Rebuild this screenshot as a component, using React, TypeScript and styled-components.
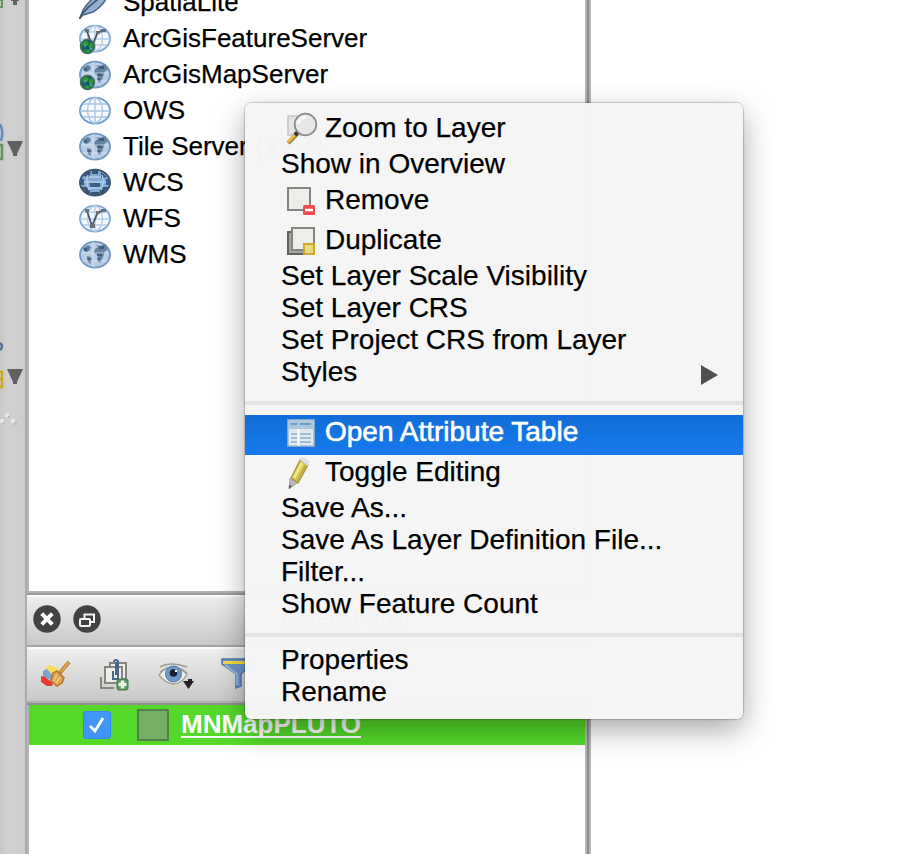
import React from "react";
import styled, { createGlobalStyle } from "styled-components";

const GlobalStyle = createGlobalStyle`
  html, body { margin: 0; padding: 0; background: #fff; }
  body { overflow: hidden; font-family: "Liberation Sans", Arial, Helvetica, sans-serif; color: #000; }
  svg { display: block; flex: none; }
`;

const Window = styled.div`
  position: relative;
  display: grid;
  grid-template-columns: 25px 566px 1fr;
  width: 913px;
  height: 854px;
  overflow: hidden;
  background: #fff;
`;

const ToolStrip = styled.div`
  display: flex;
  flex-direction: column;
  background: linear-gradient(90deg, #c8c8c8 0, #d0d0d0 8px, #cccccc 100%);
`;

const ToolSlot = styled.div<{ $gap: number }>`
  margin-top: ${(p) => p.$gap}px;
`;

const Dock = styled.div`
  display: flex;
  flex-direction: column;
  height: 854px;
  box-sizing: border-box;
  border-left: 2px solid #acacac;
`;

const Framed = styled.div<{ $height: number }>`
  box-sizing: border-box;
  height: ${(p) => p.$height}px;
  border-left: 2px solid #b4b4b4;
  border-right: 2px solid #b5b5b5;
  box-shadow: inset -2px 0 #8c8c8c, inset -4px 0 #b5b5b5;
  background: #fff;
  overflow: hidden;
`;

const SourceList = styled.div`
  margin-top: -16px;
`;

const SourceRow = styled.div`
  display: flex;
  align-items: center;
  height: 36px;
  padding-left: 50px;
  gap: 12px;
  font-size: 26px;
  line-height: 36px;
  white-space: pre;
  -webkit-text-stroke: 0.25px #000;
`;

const PanelBar = styled.div<{ $height: number }>`
  display: flex;
  align-items: center;
  box-sizing: border-box;
  height: ${(p) => p.$height}px;
  background: linear-gradient(#eeeeee, #c8c8c8);
  border-top: 2px solid #fcfcfc;
`;

const Rule = styled.div<{ $color: string }>`
  flex: none;
  height: 2px;
  background: ${(p) => p.$color};
`;

const PanelButtons = styled.div`
  display: flex;
  gap: 12px;
  padding: 0 0 4px 6px;
`;

const PanelTitle = styled.div`
  margin-left: 180px;
  padding-bottom: 6px;
  font-size: 22px;
  line-height: 26px;
`;

const LayerTools = styled.div`
  display: flex;
  align-items: center;
  gap: 27px;
  padding: 0 0 0 13px;
`;

const LayerRow = styled.div`
  display: flex;
  align-items: center;
  height: 40px;
  margin-right: 4px;
  padding-left: 54px;
  background: #54d92b;
  color: #fff;
  font-size: 26px;
  font-weight: bold;
`;

const Check = styled.div`
  display: grid;
  place-items: center;
  width: 28px;
  height: 28px;
  border-radius: 4px;
  background: linear-gradient(#4499f8, #3e94f6);
  box-shadow: inset 0 0 0 1px #3388ed;
`;

const Swatch = styled.div`
  box-sizing: border-box;
  width: 32px;
  height: 32px;
  margin: 0 12px 0 26px;
  border: 2px solid #557f49;
  background: #74af65;
`;

const LayerName = styled.span`
  line-height: 28px;
  height: 28px;
  margin-bottom: 2px;
  border-bottom: 2px solid #fff;
  box-sizing: border-box;
`;

const Menu = styled.div`
  position: absolute;
  left: 245px;
  top: 103px;
  width: 498px;
  height: 616px;
  box-sizing: border-box;
  padding-top: 4px;
  border-radius: 6px;
  overflow: hidden;
  background: rgba(245, 245, 245, 0.988);
`;

const MenuShadow = styled.div`
  position: absolute;
  left: 245px;
  top: 103px;
  width: 498px;
  height: 616px;
  border-radius: 7px;
  box-shadow: 0 0 0 1px rgba(0, 0, 0, 0.1), 0 0 3px rgba(0, 0, 0, 0.2),
    0 11px 30px rgba(0, 0, 0, 0.34);
`;

const MenuItem = styled.div<{ $icon?: boolean }>`
  display: flex;
  align-items: center;
  box-sizing: border-box;
  height: ${(p) => (p.$icon ? 40 : 32)}px;
  padding: 2px 22px 0 ${(p) => (p.$icon ? 42 : 36)}px;
  font-size: 28px;
  line-height: 30px;
  white-space: nowrap;
  -webkit-text-stroke: 0.25px #000;
`;

const ActiveItem = styled(MenuItem)`
  padding-top: 0;
  padding-bottom: 6px;
  margin-bottom: -4px;
  color: #fff;
  background: linear-gradient(#126cd6, #177bee);
  -webkit-text-stroke: 0.6px #fff;
`;

const IconCell = styled.span`
  display: grid;
  width: 38px;
  height: 36px;
  align-content: center;
  padding-top: 2px;
  box-sizing: border-box;
`;

const Separator = styled.div<{ $after: number }>`
  height: 4px;
  margin: 14px 0 ${(p) => p.$after}px;
  background: #e3e3e3;
`;

const SubArrow = styled.span`
  margin: 6px 3px 0 auto;
`;

type GlobeKind = "grid" | "land" | "dark" | "vector";

function Globe({ kind, badge }: { kind: GlobeKind; badge?: boolean }) {
  const fill = { grid: "#f7faff", land: "#b9cee6", dark: "#83aad4", vector: "#f5f8fd" }[kind];
  const edge = { grid: "#709bce", land: "#7399c4", dark: "#3c536d", vector: "#82a9d6" }[kind];
  return (
    <svg width="32" height="34" viewBox="0 -3 32 34">
      <ellipse cx="16" cy="14.6" rx="15" ry="13" fill={fill} stroke={edge} strokeWidth="1.9" />
      {kind === "dark" && (
        <>
          <path d="M4 8l5-5 3 1-2 5zM13 2h6v4h-6zM22 4l6 5-6 1zM2 19h7l3 7-4-1zM22 19h8l-6 6-4 1zM12 24h8v3h-8z" fill="#385575" />
          <path d="M2 14h28M9 7q-3 7 1 15M23 7q3 7-1 15M10 9h12M10 20h12" fill="none" stroke="#b4cde9" strokeWidth="1.5" />
          <path d="M11 15h10v4H11zM1 11h4v6H2zM27 11h4l-1 6h-3z" fill="#385e8a" />
        </>
      )}
      {(kind === "grid" || kind === "vector") && (
        <g fill="none" stroke={kind === "grid" ? "#a9c5e5" : "#b5cde8"} strokeWidth="1.4">
          <path d="M4 8h24M1 15h30M4 21h24M16 2v25" />
          <ellipse cx="16" cy="14.5" rx="7.5" ry="12.5" />
        </g>
      )}
      {kind === "land" && (
        <>
          <path d="M4 8l5-3 3 2-1 3-3 2-3-1zM8 16l4 1 1 3-2 4-3-4zM17 5l4 1 5-2 3 6-3 1-2 6-3 6-3-3 1-5-4-2 1-4 3-2z" fill="#64829f" />
          <path d="M5 8h3v3H5zM18 13h5v3h-5zM9 18h2v4H9zM20 6h5v3h-5zM19 18h2v4h-2z" fill="#405f85" />
          <path d="M3 13h26M14 2v25M3 21h25" stroke="#dce8f5" strokeOpacity=".5" strokeWidth="1.5" />
        </>
      )}
      {kind === "vector" && (
        <g fill="none" stroke="#4b535d" strokeWidth="2">
          <path d="M8 7l5 15 6-14 5-1" strokeWidth="1.8" />
          <path d="M6 5h4v3H6zM17 7h4v3h-4zM22 5h5v3h-5zM11 20h5v4h-5z" fill="#68717c" stroke="none" />
        </g>
      )}
      {badge && (
        <>
          <circle cx="8.5" cy="22.5" r="7" fill="#26704b" stroke="#46705f" strokeWidth="1.5" />
          <path d="M3 20l4-3 3 2-3 4zM12 18l2 4-2 3-3-2zM6 26h4v2H7z" fill="#2f9c2f" />
          <path d="M7 22h3v3H7zM9 16l3 1-1 3zM2 23l3 1 1 3z" fill="#134c86" />
          <path d="M5 20h2v2H5zM11 24h2v2h-2z" fill="#3ba7ae" />
        </>
      )}
    </svg>
  );
}

const Feather = () => (
  <svg width="32" height="34" viewBox="0 -17 32 34">
    <path d="M1 16l3-8Q13-6 31-16q-2 17-17 26L4 13z" fill="#91b2d6" stroke="#4d6887" strokeWidth="1.5" />
    <path d="M0 18L3 12Q12 1 27-8" fill="none" stroke="#405469" strokeWidth="1.6" />
  </svg>
);

const DropArrow = () => <path d="M7 0h16l-6 13v2h-4v-2z" fill="#606060" />;

const sources: [string, React.ReactNode][] = [
  ["SpatiaLite", <Feather />],
  ["ArcGisFeatureServer", <Globe kind="vector" badge />],
  ["ArcGisMapServer", <Globe kind="land" badge />],
  ["OWS", <Globe kind="grid" />],
  ["Tile Server (XYZ)", <Globe kind="land" />],
  ["WCS", <Globe kind="dark" />],
  ["WFS", <Globe kind="vector" />],
  ["WMS", <Globe kind="land" />],
];

const CloseIcon = () => (
  <svg width="28" height="28" viewBox="0 0 28 28">
    <circle cx="14" cy="14" r="13.7" fill="#424242" />
    <path d="M8.7 8.7l10.6 10.6M19.3 8.7L8.7 19.3" stroke="#fff" strokeWidth="4" />
  </svg>
);

const FloatIcon = () => (
  <svg width="28" height="28" viewBox="0 0 28 28">
    <circle cx="14" cy="14" r="13.7" fill="#424242" />
    <g fill="none" stroke="#f5f5f5" strokeWidth="2">
      <path d="M11.5 13V9.5h9.5v7.5h-3.5" />
      <rect x="7" y="14" width="10" height="7" rx="1" />
    </g>
  </svg>
);

const BrushIcon = () => (
  <svg width="32" height="32" viewBox="0 -1 32 32">
    <path d="M5 9l4-4 10 4-4 6z" fill="#f5df53" />
    <path d="M3 11l4-2 7 8-3 3-8-3z" fill="#7fa2cc" />
    <path d="M1 16l4 1 8 6-1 3H7l-6-4z" fill="#e83a31" />
    <path d="M29 2L20 13" stroke="#bd8434" strokeWidth="4" />
    <path d="M28 3l-7 9" stroke="#e2a956" strokeWidth="2" />
    <path d="M13 13l4-2 7 7-2 5-5 3-6-5z" fill="#dda653" stroke="#b9782e" strokeWidth="1.5" />
    <path d="M17 14l-3 7M20 17l-4 6" stroke="#f1c985" strokeWidth="1.6" />
  </svg>
);

const GroupIcon = () => (
  <svg width="32" height="34" viewBox="1 0 32 34">
    <g fill="#ededeb" stroke="#85857e" strokeWidth="2">
      <path d="M3 19v11h13" fill="none" />
      <rect x="12" y="5" width="16" height="16" />
      <rect x="7" y="9" width="17" height="16" />
    </g>
    <path d="M15 13v8h5V4q0-2-2-2t-2 2M18 17V4" fill="none" stroke="#456790" strokeWidth="2" />
    <rect x="19" y="21" width="11" height="11" rx="2" fill="#5c9660" stroke="#407943" />
    <path d="M24.5 22.5v8M20.5 26.5h8" stroke="#e6f3e5" strokeWidth="3.5" />
  </svg>
);

const EyeIcon = () => (
  <svg width="36" height="32" viewBox="0 0 36 32">
    <path d="M1 16Q12 1 29 15q-5 10-14 10Q7 24 1 16z" fill="#eeeeeb" stroke="#a4a49d" strokeWidth="1.5" />
    <path d="M2 8q10-6 27 0M2 13Q16 3 29 14" fill="none" stroke="#9d9d96" strokeWidth="1.5" />
    <circle cx="15.5" cy="15" r="8" fill="#6d99cb" stroke="#55779f" />
    <circle cx="15.5" cy="14" r="3.8" fill="#17202c" />
    <path d="M17 11h2v2h-2z" fill="#fff" />
    <path d="M25 22h11l-5.5 8zM30 20h4v3h-4z" fill="#222" />
  </svg>
);

const FilterIcon = () => (
  <svg width="32" height="34" viewBox="0 2 32 34">
    <path d="M1 3h30v5L20 18v12l-5 2V18L1 8z" fill="#6c97c8" stroke="#537aa7" strokeWidth="1.5" />
    <path d="M2 5h29v3H2z" fill="#f2dd45" />
    <path d="M16 18v11M4 9l12 9" stroke="#9dbbdc" strokeWidth="1.8" />
  </svg>
);

const ZoomIcon = () => (
  <svg width="31" height="34" viewBox="0 0 31 34">
    <path d="M1 4h17v19H1z" fill="#e4e4e2" stroke="#c5c5c3" strokeWidth="1.5" />
    <path d="M1 31L10 22" stroke="#a18131" strokeWidth="4.2" />
    <path d="M1 30l7-7" stroke="#f3c143" strokeWidth="2.4" />
    <path d="M8 23l4-4" stroke="#30302e" strokeWidth="4" />
    <circle cx="18.5" cy="12.5" r="10.8" fill="#e7e7e7" stroke="#8c8c8c" strokeWidth="1.7" />
    <path d="M11 12q1-6 8-7" fill="none" stroke="#f7f7f7" strokeWidth="3" />
  </svg>
);

const RemoveIcon = () => (
  <svg width="28" height="32" viewBox="0 -2 28 32">
    <rect x="1" y="1" width="22" height="22" fill="#ededeb" stroke="#858580" strokeWidth="2" />
    <rect x="16" y="18" width="12" height="10" rx="1.5" fill="#ed4c4f" />
    <path d="M18 23h8" stroke="#fff" strokeWidth="2.4" />
  </svg>
);

const DuplicateIcon = () => (
  <svg width="28" height="32" viewBox="0 -2 28 32">
    <path d="M1 5v22h20V5z" fill="#a4a49d" stroke="#63635e" strokeWidth="2" />
    <rect x="5" y="1" width="22" height="22" fill="#ededeb" stroke="#85857d" strokeWidth="2" />
    <rect x="17" y="17" width="10" height="10" fill="#eadb7d" stroke="#cda82d" strokeWidth="2" />
  </svg>
);

const TableIcon = () => (
  <svg width="28" height="32" viewBox="0 -2 28 32">
    <rect x=".8" y=".8" width="26.4" height="26.4" fill="#e2e9ec" stroke="#82a9cc" strokeWidth="1.5" />
    <path d="M2 2h24v8H2z" fill="#acc8dd" />
    <path d="M4 5h6M13 5h11" stroke="#6f9fc8" strokeWidth="2" />
    <path d="M4 15h6M13 15h11M4 19h6M13 19h11M4 23h6M13 23h11" stroke="#a2bcd0" strokeWidth="2" />
    <path d="M11.5 10v17" stroke="#fafafa" strokeWidth="2" />
  </svg>
);

const PencilIcon = () => (
  <svg width="26" height="34" viewBox="0 0 26 34">
    <path d="M13 4l8 5-10 18-7-5z" fill="#d7c64f" stroke="#a39540" strokeWidth="1.2" />
    <path d="M15 7L7 22" stroke="#f1e895" strokeWidth="2.6" />
    <path d="M19 9L10 25" stroke="#b7a43b" strokeWidth="1.3" />
    <path d="M13 4l2-3 8 4-2 5z" fill="#e0e0de" />
    <path d="M3 22l7 5-8 6z" fill="#b7b7b4" stroke="#999" strokeWidth=".8" />
    <path d="M2 29l3 1-3 3z" fill="#555" />
  </svg>
);

function IconEntry({ icon, children }: { icon: React.ReactNode; children: React.ReactNode }) {
  return (
    <MenuItem $icon>
      <IconCell>{icon}</IconCell>
      <span>{children}</span>
    </MenuItem>
  );
}

export default function App() {
  return (
    <>
      <GlobalStyle />
      <Window>
        <ToolStrip>
          <ToolSlot $gap={0}>
            <svg width="25" height="9">
              <path d="M0 0h2v7H0" fill="none" stroke="#5e965d" strokeWidth="2" />
              <path d="M11 0h8v1h-2v4h-4V1h-2z" fill="#606060" />
            </svg>
          </ToolSlot>
          <ToolSlot $gap={113}>
            <svg width="25" height="40">
              <path d="M0 2q4 7 1 17" fill="none" stroke="#5d8dca" strokeWidth="2.5" />
              <path d="M0 23h2v14H0" fill="none" stroke="#5e965d" strokeWidth="2.5" />
              <g transform="translate(0 19)"><DropArrow /></g>
            </svg>
          </ToolSlot>
          <ToolSlot $gap={178}>
            <svg width="25" height="88">
              <path d="M0 3q4 3 0 7" fill="none" stroke="#536f9b" strokeWidth="2.5" />
              <path d="M0 32h2v15H0M0 39h2" fill="none" stroke="#cda619" strokeWidth="2.3" />
              <g transform="translate(0 29)"><DropArrow /></g>
              <path d="M5 73h4v4H5zM0 79h4v4H0zM11 79h4v4h-4z" fill="#e6e6e6" />
              <path d="M8 76h2v2H8zM3 82h2v2H3zM14 82h3v3h-3z" fill="#bcbcbc" />
            </svg>
          </ToolSlot>
        </ToolStrip>
        <Dock>
          <Framed $height={591}>
            <SourceList>
              {sources.map(([name, icon]) => (
                <SourceRow key={name}>{icon}{name}</SourceRow>
              ))}
            </SourceList>
          </Framed>
          <Rule $color="#b1b1b1" />
          <Rule $color="#9b9b9b" />
          <PanelBar $height={50}>
            <PanelButtons><CloseIcon /><FloatIcon /></PanelButtons>
            <PanelTitle>Layers Panel</PanelTitle>
          </PanelBar>
          <Rule $color="#a5a5a5" />
          <PanelBar $height={54}>
            <LayerTools><BrushIcon /><GroupIcon /><EyeIcon /><FilterIcon /></LayerTools>
          </PanelBar>
          <Rule $color="#b1b1b1" />
          <Rule $color="#909090" />
          <Framed $height={149}>
            <LayerRow>
              <Check>
                <svg width="20" height="20" viewBox="0 0 20 20">
                  <path d="M3 11l5 5L16 3" fill="none" stroke="#fff" strokeWidth="2.8" />
                </svg>
              </Check>
              <Swatch />
              <LayerName>MNMapPLUTO</LayerName>
            </LayerRow>
          </Framed>
        </Dock>
        <MenuShadow />
        <Menu>
          <IconEntry icon={<ZoomIcon />}>Zoom to Layer</IconEntry>
          <MenuItem>Show in Overview</MenuItem>
          <IconEntry icon={<RemoveIcon />}>Remove</IconEntry>
          <IconEntry icon={<DuplicateIcon />}>Duplicate</IconEntry>
          <MenuItem>Set Layer Scale Visibility</MenuItem>
          <MenuItem>Set Layer CRS</MenuItem>
          <MenuItem>Set Project CRS from Layer</MenuItem>
          <MenuItem>
            Styles
            <SubArrow>
              <svg width="17" height="20"><path d="M0 0l17 10L0 20z" fill="#505050" /></svg>
            </SubArrow>
          </MenuItem>
          <Separator $after={10} />
          <ActiveItem $icon><IconCell><TableIcon /></IconCell>Open Attribute Table</ActiveItem>
          <IconEntry icon={<PencilIcon />}>Toggle Editing</IconEntry>
          <MenuItem>Save As...</MenuItem>
          <MenuItem>Save As Layer Definition File...</MenuItem>
          <MenuItem>Filter...</MenuItem>
          <MenuItem>Show Feature Count</MenuItem>
          <Separator $after={6} />
          <MenuItem>Properties</MenuItem>
          <MenuItem>Rename</MenuItem>
        </Menu>
      </Window>
    </>
  );
}
